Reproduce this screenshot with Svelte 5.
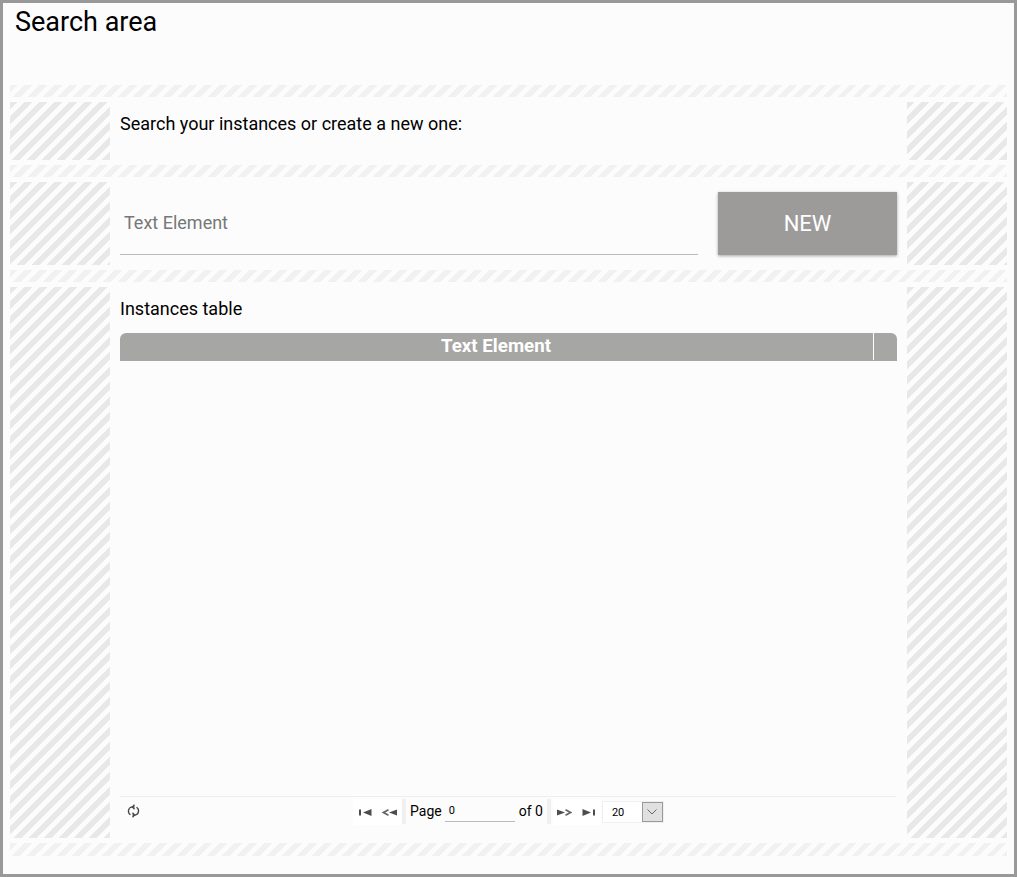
<script lang="ts">
  let search = "";
  let page = "0";
  let size = "20";
</script>

<div class="page">
  <div class="title">Search area</div>

  <div class="stripe"></div>
  <div class="row intro">
    <div class="side"></div>
    <div class="main">Search your instances or create a new one:</div>
    <div class="side"></div>
  </div>

  <div class="stripe"></div>
  <div class="row controls">
    <div class="side"></div>
    <div class="main">
      <input class="search" placeholder="Text Element" bind:value={search} />
      <button class="new">NEW</button>
    </div>
    <div class="side"></div>
  </div>

  <div class="stripe"></div>
  <div class="row results">
    <div class="side"></div>
    <div class="main">
      <div class="caption">Instances table</div>
      <div class="thead">
        <div class="th">Text Element</div>
        <div class="th-end"></div>
      </div>
      <div class="tbody"></div>
      <div class="pager">
        <div class="refresh">
          <svg width="13" height="14" viewBox="0 0 13 14" fill="none" stroke="#444" stroke-width="1.3">
            <path d="M3.500 10.800A4.300 4.300 0 0 1 4.500 3H7.500" />
            <path d="M9.500 3.200A4.300 4.300 0 0 1 8.500 11H5.500" />
            <path d="M7.500 0.800L5.500 3L7.500 5.200" />
            <path d="M5.500 8.800L7.500 11L5.500 13.200" />
          </svg>
        </div>
        <div class="nav">
          <button class="pg" aria-label="First">
            <svg width="13" height="9" viewBox="0 0 13 9"><path d="M0 1.500h2v6H0zM12.500 1v7L4 4.500z" fill="#4d4d4d" /></svg>
          </button>
          <button class="pg" aria-label="Previous">
            <svg width="15" height="9" viewBox="0 0 15 9">
              <path d="M6.500 1.800L1.500 4.500l5 2.700" fill="none" stroke="#666" stroke-width="1.700" />
              <path d="M15 1.500v6L7 4.500z" fill="#4d4d4d" />
            </svg>
          </button>
          <span class="sep"></span>
          <span class="lbl">Page</span>
          <input class="num" bind:value={page} />
          <span class="lbl">of 0</span>
          <span class="sep right"></span>
          <button class="pg" aria-label="Next">
            <svg width="15" height="9" viewBox="0 0 15 9">
              <path d="M0 1.500v6L8 4.500z" fill="#4d4d4d" />
              <path d="M8.500 1.800L13.500 4.500l-5 2.700" fill="none" stroke="#666" stroke-width="1.700" />
            </svg>
          </button>
          <button class="pg" aria-label="Last">
            <svg width="13" height="9" viewBox="0 0 13 9"><path d="M0.500 1v7L9 4.500zM11 1.500h2v6h-2z" fill="#4d4d4d" /></svg>
          </button>
          <div class="size">
            <span class="size-val">{size}</span>
            <span class="arrow">
              <svg width="10" height="6" viewBox="0 0 10 6" fill="none" stroke="#666"><path d="M0.500 0.500L5 5L9.500 0.500" /></svg>
            </span>
          </div>
        </div>
      </div>
    </div>
    <div class="side"></div>
  </div>
  <div class="stripe last"></div>
</div>

<style>
  :global(body) {
    margin: 0;
    background: #fcfcfc;
  }

  .page {
    box-sizing: border-box;
    width: 1017px;
    height: 877px;
    border: 3px solid #999;
    padding: 0 7px;
    background: #fcfcfc;
    font-family: Roboto, sans-serif;
    color: #000;
    display: flex;
    flex-direction: column;
    gap: 5px;
  }

  .title {
    height: 77px;
    padding-left: 5px;
    font-size: 27px;
    line-height: 38px;
  }

  .stripe {
    height: 12px;
    background: repeating-linear-gradient(135deg, #f1f1f1 0 5.300px, #fcfcfc 5.300px 10.600px);
  }

  .stripe.last {
    height: 13px;
  }

  .row {
    display: flex;
  }

  .intro {
    height: 58px;
  }

  .controls {
    height: 83px;
  }

  .results {
    height: 551px;
  }

  .side {
    flex: 0 0 100px;
    background: repeating-linear-gradient(135deg, #e8e8e8 0 5.300px, #fcfcfc 5.300px 10.600px);
  }

  .main {
    flex: 1;
    min-width: 0;
    padding: 0 10px;
  }

  .intro .main {
    font-size: 18px;
    line-height: 44px;
  }

  .controls .main {
    display: flex;
    align-items: flex-start;
    gap: 20px;
    padding-top: 10px;
  }

  .search {
    box-sizing: border-box;
    width: 578px;
    height: 63px;
    border: none;
    border-bottom: 1px solid #bbb;
    background: none;
    padding: 0 4px 2px;
    font-family: Roboto, sans-serif;
    font-size: 18px;
    outline: none;
  }

  .search::placeholder {
    color: #777;
    opacity: 1;
  }

  .new {
    width: 179px;
    height: 63px;
    border: none;
    background: #9c9b99;
    color: #fff;
    font-family: Roboto, sans-serif;
    font-size: 22px;
    box-shadow: 0 1px 3px rgba(0, 0, 0, 0.35);
  }

  .results .main {
    display: flex;
    flex-direction: column;
  }

  .caption {
    height: 46px;
    font-size: 18px;
    line-height: 44px;
  }

  .thead {
    display: flex;
    height: 28px;
    background: #a6a6a4;
    border-radius: 6px 6px 0 0;
  }

  .th {
    flex: 1;
    padding-right: 1px;
    text-align: center;
    color: #fff;
    font-size: 18.700px;
    font-weight: 700;
    line-height: 26px;
  }

  .th-end {
    box-sizing: border-box;
    flex: 0 0 24px;
    height: 27px;
    border-left: 1px solid #fff;
  }

  .tbody {
    height: 435px;
  }

  .pager {
    box-sizing: border-box;
    position: relative;
    width: 776px;
    height: 42px;
    padding-top: 2px;
    border-top: 1px solid #eee;
    display: flex;
    justify-content: center;
  }

  .refresh {
    position: absolute;
    left: 7px;
    top: 6px;
  }

  .nav {
    display: flex;
    align-items: flex-start;
    height: 28px;
    margin-left: 1px;
  }

  .pg {
    width: 24px;
    height: 26px;
    padding: 0;
    border: none;
    background: #fff;
    display: flex;
    align-items: center;
    justify-content: center;
  }

  .sep {
    width: 4px;
    height: 25px;
    background: #f0f0f0;
    margin: 0 4px 0 1px;
  }

  .sep.right {
    margin: 0 2px 0 4px;
  }

  .lbl {
    font-size: 14px;
    line-height: 24px;
  }

  .num {
    box-sizing: border-box;
    width: 70px;
    height: 22px;
    margin: 1px 4px 0 3px;
    padding: 0 4px;
    border: none;
    border-bottom: 1px solid #bbb;
    background: none;
    font-family: Roboto, sans-serif;
    font-size: 11px;
    outline: none;
  }

  .size {
    display: flex;
    align-items: center;
    width: 62px;
    height: 22px;
    margin: 2px 0 0 1px;
    background: #fff;
    border: 1px solid #f0f0f0;
    box-sizing: border-box;
  }

  .size-val {
    flex: 1;
    font-size: 11px;
    padding-left: 9px;
  }

  .arrow {
    box-sizing: border-box;
    width: 21px;
    height: 20px;
    background: #e0e0e0;
    border: 1px solid #999;
    display: flex;
    align-items: center;
    justify-content: center;
  }
</style>
